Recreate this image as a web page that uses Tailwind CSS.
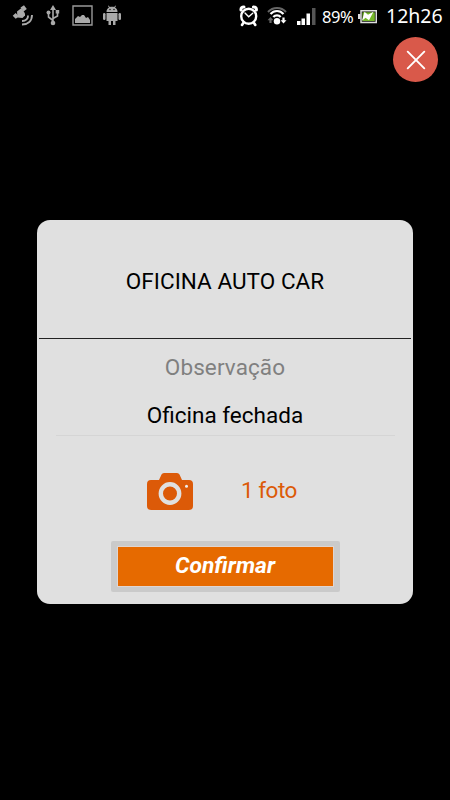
<!DOCTYPE html>
<html lang="pt">
<head>
<meta charset="utf-8">
<title>Oficina Auto Car</title>
<script src="https://cdn.jsdelivr.net/npm/@tailwindcss/browser@4"></script>
</head>
<body class="bg-black">
<div class="flex h-[800px] w-[450px] flex-col overflow-hidden bg-black font-[Roboto,sans-serif]">
  <header class="flex h-8 shrink-0 items-start justify-between pr-[7px] pl-3 text-white">
    <div class="flex gap-2">
      <svg class="h-8 w-6" viewBox="12 0 24 32" fill="#aaa">
        <path d="M17 11.500l4.500-3.500 3.500 5.500 0 2-2.500 2.500-5-.5z"/>
        <path d="M20.500 7.500l3.500-2.300 2.800 3.800-3.300 2.500zM12.700 15.800l3-2.800 3.300 3.500-3.300 2.300z"/>
        <path d="M28 15.500c.3 3-2 5.500-6 5.500M32 15c0 6-4 9.500-10 9.500" fill="none" stroke="#aaa" stroke-width="1.900"/>
      </svg>
      <svg class="h-8 w-[18px]" viewBox="44 0 18 32" fill="#aaa">
        <path d="M53 5l3 5h-6z"/><circle cx="53" cy="23" r="2.300"/>
        <path d="M53 9v14M48.500 13v4l4.500 3.500M57.500 11v5L53 18.500" fill="none" stroke="#aaa" stroke-width="1.600"/>
        <circle cx="48.500" cy="12.500" r="2"/><path d="M55.700 10h3.500v3.500h-3.500z"/>
      </svg>
      <svg class="ml-px h-8 w-[23px]" viewBox="71 0 23 32" fill="#aaa">
        <path d="M73 6h19v19H73z" fill="none" stroke="#999" stroke-width="1.400"/>
        <path d="M75 23v-4l3-3 2 1 2-2h2l2 3 2-1 2 3v3z"/>
      </svg>
      <svg class="h-8 w-5" viewBox="102.500 0 20 32" fill="#aaa">
        <path d="M107 13h11v8h-2v4h-2.500v-4h-2v4H109v-4h-2zM107 12c0-2.300 1-3.600 2.500-4.400L108.500 6l.6-.4 1.200 1.500c1.400-.4 3-.4 4.400 0l1.200-1.500.6.4-1 1.600c1.500.8 2.500 2.100 2.500 4.400z"/>
        <rect x="103.500" y="13" width="2.500" height="7" rx="1.200"/><rect x="119" y="13" width="2.500" height="7" rx="1.200"/>
        <circle cx="110.500" cy="9.500" r=".7" fill="#000"/><circle cx="114.500" cy="9.500" r=".7" fill="#000"/>
      </svg>
    </div>
    <div class="flex items-start">
      <svg class="h-8 w-[78px]" viewBox="239 0 78 32">
        <g fill="none" stroke="#fff" stroke-linecap="round"><circle cx="248.700" cy="16.200" r="7.500" stroke-width="2.400"/><path d="M245 13l3.700 3.800 4-3.600" stroke-width="1.400"/><path d="M241 10c-.3-2 1.200-3.200 3-3M256.400 10c.3-2-1.200-3.200-3-3" stroke-width="3"/><path d="M243.300 23l-1.300 2M254 23l1.300 2" stroke-width="2.600"/></g>
        <g fill="none" stroke-width="2"><path d="M268 12c4.800-5.300 13.200-5.300 18 0" stroke="#666"/><path d="M270.500 14c3.500-4 9.500-4 13 0M273.300 17c2-2.300 5.400-2.300 7.400 0" stroke="#fff" stroke-width="2.200"/></g>
        <circle cx="277" cy="21.300" r="3.200" fill="#fff"/>
        <path d="M270.500 17l-3 3.200h1.900v2.800h2.200v-2.800h1.900z" fill="#666"/><path d="M283.500 23.500l-3-3.200h1.900v-2.800h2.200v2.800h1.900z" fill="#fff"/>
        <path d="M297 21h3.500v4H297zM301.500 18.500h3.500V25h-3.500zM306.500 13.500h3.500V25h-3.500z" fill="#fff"/><path d="M312 8h3.500v17H312z" fill="#555"/>
      </svg>
      <span class="ml-[5px] w-[32px] pt-[5px] font-['Noto_Sans'] text-[16.500px] leading-[24px] tracking-[-0.500px] whitespace-nowrap">89%</span>
      <svg class="ml-[4px] h-8 w-[19px]" viewBox="358 0 19 32">
        <path d="M361 10.700h15.300v11.800H361z" fill="#111" stroke="#ddd" stroke-width="1.500"/><path d="M358 14h2.500v5H358z" fill="#ddd"/>
        <path d="M362.500 12.300h12.300V21h-12.300z" fill="#76b82a"/><path d="M362 20.800l2.500-9 3.500 3 5.500-3-4.500 8.500-3.500-2.500z" fill="#fff"/>
      </svg>
      <span class="ml-[9px] w-[57px] pt-[4px] font-['Noto_Sans'] text-[19.500px] leading-[24px] whitespace-nowrap">12h26</span>
    </div>
  </header>

  <div class="flex shrink-0 justify-end pt-[5px] pr-3">
    <button class="flex size-[45px] items-center justify-center rounded-full bg-[#d9594a]" aria-label="Fechar">
      <svg class="size-[20px]" viewBox="0 0 20 20" fill="none" stroke="#fff" stroke-width="1.900" stroke-linecap="round"><path d="M1.700 1.700l16.600 16.600M18.300 1.700L1.700 18.300"/></svg>
    </button>
  </div>

  <main class="mt-[138px] ml-[37px] flex h-[384px] w-[376px] shrink-0 flex-col items-center rounded-[13px] bg-[#e0e0e0] px-[2px]">
    <h1 class="flex h-[119px] w-full items-center justify-center border-b border-[#222] pt-[5px] text-[22.500px] tracking-[0.04px] text-black">OFICINA AUTO CAR</h1>
    <p class="mt-[14px] text-[22.500px] leading-[28px] tracking-[0.1px] text-[#808080]">Observação</p>
    <div class="mt-[12px] h-[54px] w-[339px] pt-[8px] text-center">
      <p class="text-[22.500px] leading-[28px] text-black">Oficina fechada</p>
      <div class="mt-[6px] h-px bg-[#d5d5d5]"></div>
    </div>
    <div class="mt-[26px] flex w-full pl-[108px]">
      <svg class="h-[37px] w-[46px]" viewBox="0 0 46 37" fill="#dc5a08">
        <path d="M4 7h8l2.500-5.500Q15.200 0 17 0h13q1.800 0 2.500 1.500L35 7h7q4 0 4 4v22q0 4-4 4H4q-4 0-4-4V11q0-4 4-4z"/>
        <circle cx="23" cy="20.500" r="9.200" fill="none" stroke="#e0e0e0" stroke-width="4.400"/><circle cx="39.500" cy="13.300" r="1.500" fill="#eee"/>
      </svg>
      <span class="ml-[48px] pt-[3px] text-[22.500px] leading-[28px] tracking-[-0.500px] text-[#dc5a08]">1 foto</span>
    </div>
    <button class="mt-[31px] h-[51px] w-[229px] shrink-0 rounded-[2px] bg-[#cacaca] p-[6px]">
      <span class="flex h-[41px] w-[217px] -translate-y-px items-center justify-center border border-[#e0d5d0] bg-[#e66a00] text-[22.800px] font-bold text-white italic">Confirmar</span>
    </button>
  </main>
</div>
</body>
</html>
